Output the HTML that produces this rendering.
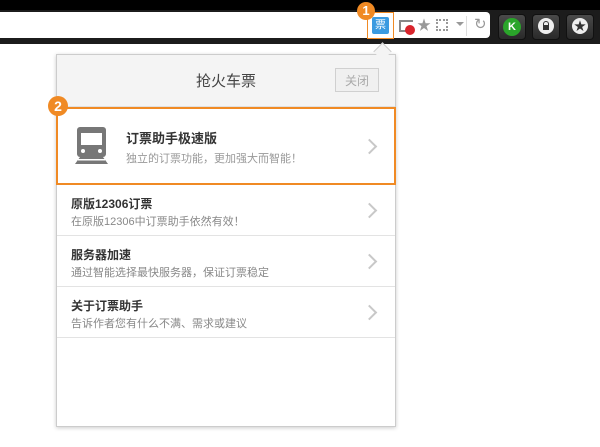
<html><head><style>
body{margin:0;width:600px;height:447px;background:#fff;position:relative;overflow:hidden;font-family:"Liberation Sans","Noto Sans CJK SC",sans-serif}
.a{position:absolute}
.row{position:absolute;left:57px;width:338px;border-bottom:1px solid #e3e3e3}
.row b{position:absolute;left:14px;top:10px;font-size:12px;color:#333}
.row span{position:absolute;left:14px;top:28px;font-size:11px;color:#888}
.chev{position:absolute;right:18px;width:9px;height:9px;border-right:2px solid #c8c8c8;border-top:2px solid #c8c8c8;transform:rotate(45deg)}
.btn{position:absolute;top:14px;width:26px;height:24px;border-radius:4px;background:linear-gradient(#4a4a4a,#2a2a2a);border:1px solid #111}
</style></head><body>
<div class="a" style="left:0;top:0;width:600px;height:44px;background:#1c1c1c"></div>
<div class="a" style="left:0;top:0;width:600px;height:10px;background:#000"></div>
<div class="a" style="left:0;top:12px;width:490px;height:26px;background:#fff;border-radius:0 4px 4px 0"></div>
<div class="a" style="left:367px;top:12px;width:27px;height:27px;border:1px solid #f08a24;box-sizing:border-box"></div>
<div class="a" style="left:372px;top:17px;width:17px;height:17px;background:#3a9ae0;color:#fff;font-size:11px;text-align:center;line-height:17px;border-radius:2px">票</div>
<div class="a" style="left:357px;top:2px;width:18px;height:18px;border-radius:50%;background:#f08a24;color:#fff;font-weight:bold;font-size:13px;text-align:center;line-height:18px">1</div>
<div class="a" style="left:399px;top:20px;width:12px;height:8px;border:2px solid #888;border-right:none"></div>
<div class="a" style="left:405px;top:25px;width:10px;height:10px;border-radius:50%;background:#d8242c"></div>
<div class="a" style="left:417px;top:15px;color:#999;font-size:14px">★</div>
<div class="a" style="left:436px;top:19px;width:12px;height:12px;border:2px dotted #999;box-sizing:border-box"></div>
<div class="a" style="left:456px;top:22px;border:4px solid transparent;border-top-color:#999"></div>
<div class="a" style="left:466px;top:16px;width:1px;height:20px;background:#ddd"></div>
<div class="a" style="left:474px;top:15px;color:#999;font-size:15px">↻</div>
<div class="btn" style="left:498px"><div class="a" style="left:4px;top:3px;width:18px;height:18px;border-radius:50%;background:#2aa52a;color:#fff;font-size:11px;font-weight:bold;text-align:center;line-height:18px">K</div></div>
<div class="btn" style="left:532px"><div class="a" style="left:5px;top:3px;width:16px;height:16px;border-radius:50%;background:#eee"></div><div class="a" style="left:10px;top:10px;width:6px;height:5px;background:#333"></div><div class="a" style="left:10px;top:6px;width:4px;height:4px;border:1px solid #333;border-bottom:none;border-radius:3px 3px 0 0"></div></div>
<div class="btn" style="left:566px"><div class="a" style="left:5px;top:3px;width:16px;height:16px;border-radius:50%;background:#eee;color:#333;font-size:12px;text-align:center;line-height:16px">★</div></div>
<div class="a" style="left:56px;top:54px;width:338px;height:371px;border:1px solid #ccc;background:#fff;box-shadow:0 1px 4px rgba(0,0,0,.2)"></div>
<div class="a" style="left:57px;top:55px;width:338px;height:51px;background:#f4f4f4;border-bottom:1px solid #e0e0e0"></div>
<div class="a" style="left:376px;top:45px;width:12px;height:12px;background:#f4f4f4;border-left:1px solid #ccc;border-top:1px solid #ccc;transform:rotate(45deg)"></div>
<div class="a" style="left:57px;top:70px;width:338px;text-align:center;font-size:15px;color:#444">抢火车票</div>
<div class="a" style="left:335px;top:68px;width:44px;height:24px;border:1px solid #d0d0d0;background:#f0f0f0;color:#aaa;font-size:12px;text-align:center;line-height:24px;box-sizing:border-box">关闭</div>
<div class="a" style="left:56px;top:107px;width:340px;height:78px;border:2px solid #f08a24;box-sizing:border-box"></div>
<div class="a" style="left:48px;top:96px;width:20px;height:20px;border-radius:50%;background:#f08a24;color:#fff;font-weight:bold;font-size:14px;text-align:center;line-height:20px">2</div>
<svg class="a" style="left:72px;top:126px" width="40" height="40" viewBox="0 0 40 40"><rect x="5" y="1" width="29" height="30" rx="3" fill="#777"/><rect x="9" y="7" width="21" height="12" fill="#fff"/><circle cx="11" cy="25" r="2" fill="#fff"/><circle cx="28" cy="25" r="2" fill="#fff"/><path d="M8 31 L3 38 H36 L31 31Z" fill="#777"/><rect x="6" y="33" width="27" height="1.5" fill="#fff"/></svg>
<div class="a" style="left:126px;top:128px;font-size:13px;font-weight:bold;color:#333">订票助手极速版</div>
<div class="a" style="left:126px;top:150px;font-size:11px;color:#999">独立的订票功能，更加强大而智能！</div>
<div class="chev" style="left:364px;top:141px"></div>
<div class="row" style="top:185px;height:50px"><b>原版12306订票</b><span>在原版12306中订票助手依然有效！</span><div class="chev" style="left:307px;top:20px"></div></div>
<div class="row" style="top:236px;height:50px"><b>服务器加速</b><span>通过智能选择最快服务器，保证订票稳定</span><div class="chev" style="left:307px;top:20px"></div></div>
<div class="row" style="top:287px;height:50px"><b>关于订票助手</b><span>告诉作者您有什么不满、需求或建议</span><div class="chev" style="left:307px;top:20px"></div></div>
</body></html>
